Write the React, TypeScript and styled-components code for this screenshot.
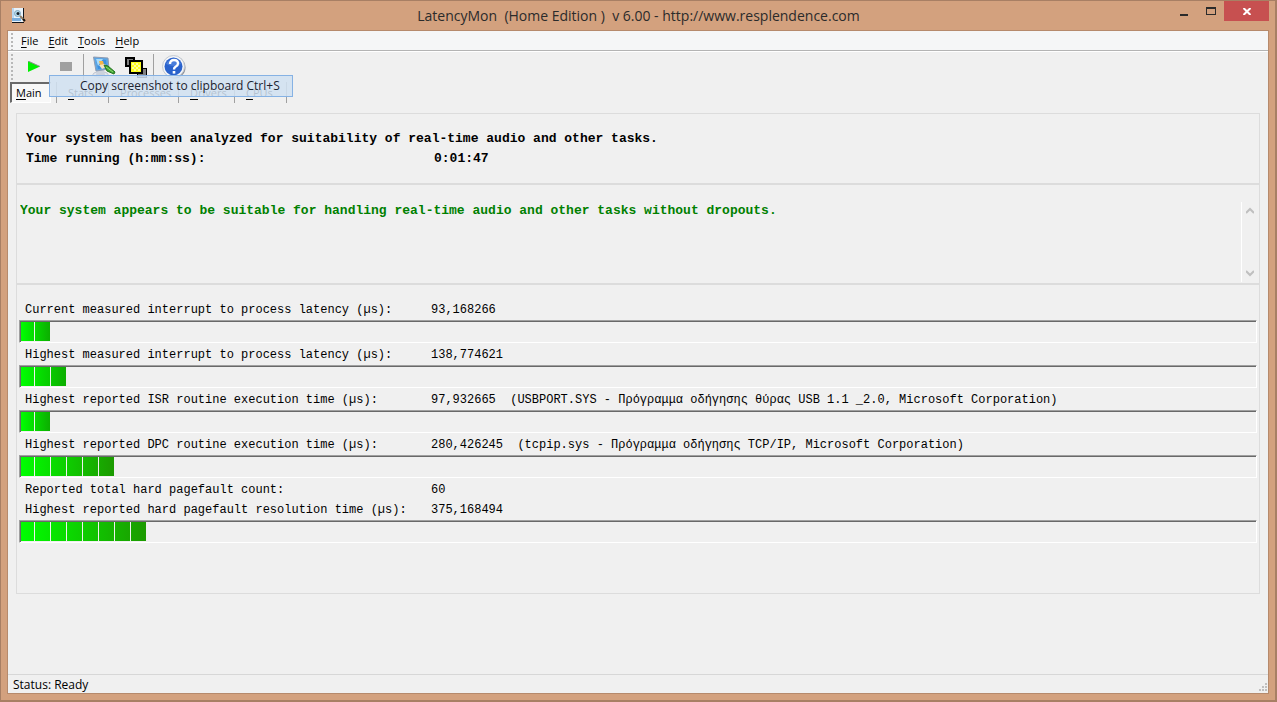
import React from "react";
import styled, { createGlobalStyle } from "styled-components";

const GlobalStyle = createGlobalStyle`
  * { box-sizing: border-box; }
  body { margin: 0; background: #ffffff; }
  button, textarea { font: inherit; color: inherit; margin: 0; padding: 0; border: 0; background: none; }
`;

const ui = `"Open Sans", "Noto Sans", sans-serif`;
const mono = `"Courier New", "Liberation Mono", monospace`;

const Window = styled.div`
  display: flex;
  flex-direction: column;
  min-height: 100vh;
  padding: 0 7px 7px;
  border: solid #a87f64;
  border-width: 1px 2px 2px 1px;
  background: #d3a17e;
  font: 12px/16px ${ui};
  color: #000000;
`;

const TitleBar = styled.header`
  display: grid;
  grid-template-columns: 100px 1fr 100px;
  height: 29px;
  margin-right: -1px;
`;

const TitleIcon = styled.div`
  padding: 6px 0 0 3px;
  line-height: 0;
`;

const Title = styled.h1`
  margin: 0;
  font-size: 14px;
  line-height: 29px;
  font-weight: 400;
  text-align: center;
  color: #2b2b2b;
  white-space: pre;
`;

const Controls = styled.div`
  display: flex;
  justify-content: flex-end;
`;

const ControlButton = styled.button<{ $close?: boolean }>`
  display: flex;
  align-items: center;
  justify-content: center;
  flex: none;
  width: ${(p) => (p.$close ? 45 : 27)}px;
  height: 20px;
  background: ${(p) => (p.$close ? "#c75050" : "transparent")};
`;

const Client = styled.div`
  flex: 1;
  display: flex;
  flex-direction: column;
  border: 1px solid #b68a6c;
  margin: 0 -1px -1px;
  background: #f0f0f0;
`;

const MenuBar = styled.nav`
  display: flex;
  align-items: center;
  height: 20px;
  padding-left: 3px;
  background: #f5f6f7;
  border-bottom: 1px solid #b4b4b4;
`;

const Grip = styled.span`
  flex: none;
  width: 3px;
  align-self: stretch;
  margin: 2px 4px 0 0;
  background: repeating-linear-gradient(to bottom, #b8b8b8 0 2px, transparent 2px 4px);
  background-size: 2px 100%;
  background-repeat: no-repeat;
`;

const MenuButton = styled.button`
  padding: 0 7px 0 3px;
  font-size: 11px;
  line-height: 16px;
`;

const Accel = styled.span`
  text-decoration: underline;
  text-underline-offset: 2px;
`;

const ToolBar = styled.div`
  display: flex;
  align-items: center;
  height: 31px;
  padding-left: 3px;
  border-top: 1px solid #ffffff;
`;

const ToolButton = styled.button`
  display: flex;
  align-items: center;
  justify-content: center;
  width: 32px;
  height: 28px;
`;

const ToolSeparator = styled.span`
  width: 1px;
  height: 26px;
  margin: 0 4px 0 1px;
  background: #a0a0a0;
`;

const TabArea = styled.div`
  position: relative;
`;

const Tabs = styled.div`
  display: flex;
  height: 21px;
  padding-left: 2px;
`;

const Tab = styled.button<{ $width: number; $active?: boolean }>`
  width: ${(p) => p.$width}px;
  height: 21px;
  padding-left: ${(p) => (p.$active ? 4 : 11)}px;
  font-size: 11px;
  text-align: left;
  border: solid;
  border-width: ${(p) => (p.$active ? "2px 1px 1px 2px" : "0 0 0 1px")};
  border-color: ${(p) => (p.$active ? "#696969 #ffffff #ffffff #696969" : "#a0a0a0")};
  margin-right: ${(p) => (p.$active ? 5 : 0)}px;
  background: ${(p) => (p.$active ? "#f8f8f8" : "transparent")};
`;

const TabEnd = styled.span`
  width: 1px;
  background: #a0a0a0;
`;

const HoverItem = styled.div`
  position: absolute;
  left: 41px;
  top: -7px;
  width: 244px;
  height: 22px;
  padding-left: 30px;
  line-height: 20px;
  white-space: nowrap;
  color: #1c2430;
  background: rgba(209, 225, 241, 0.86);
  border: 1px solid #86b2e4;
`;

const Panels = styled.main`
  flex: 1;
  padding: 10px 8px 0;
  font-family: ${mono};
`;

const Panel = styled.section<{ $height: number }>`
  min-height: ${(p) => p.$height}px;
  border: 1px solid #dcdcdc;
`;

const Summary = styled(Panel)`
  padding: 15px 9px 13px;
  font-size: 13px;
  line-height: 20px;
  font-weight: 700;
`;

const SummaryRow = styled.div`
  display: grid;
  grid-template-columns: 408px 1fr;
`;

const Verdict = styled(Panel)`
  display: flex;
  padding: 17px 0 1px 3px;
`;

const VerdictText = styled.textarea`
  flex: 1;
  height: 80px;
  resize: none;
  outline: none;
  overflow: hidden;
  font-size: 13px;
  line-height: 18px;
  font-weight: 700;
  color: #008000;
`;

const ScrollBar = styled.div`
  display: flex;
  flex-direction: column;
  justify-content: space-between;
  align-items: center;
  width: 18px;
  padding: 5px 2px 5px 0;
  border-left: 1px solid #ffffff;
`;

const Readings = styled(Panel)`
  padding: 13px 2px 0;
  font-size: 12px;
  line-height: 20px;
`;

const Reading = styled.div`
  padding-top: 2px;
`;

const ReadingRow = styled.div`
  display: grid;
  grid-template-columns: 406px 1fr;
  padding-left: 6px;
  height: 20px;
  white-space: pre;
`;

const Gauge = styled.div`
  height: 23px;
  border: 1px solid #ffffff;
  border-top-color: #a0a0a0;
  border-left-color: #a0a0a0;
`;

const GaugeWell = styled.div`
  height: 21px;
  border: solid #696969;
  border-width: 1px 0 0 1px;
  padding-bottom: 1px;
`;

const GaugeFill = styled.div<{ $blocks: number }>`
  width: ${(p) => p.$blocks * 16 - 3}px;
  height: 19px;
  background:
    repeating-linear-gradient(to right, #f0f0f0 0 1px, transparent 1px 16px) -3px 0 / 400px 100%,
    linear-gradient(to right, #00ff00, ${(p) => (p.$blocks > 4 ? "#1c9a00" : "#0cae00")});
`;

const StatusBar = styled.footer`
  display: flex;
  justify-content: space-between;
  height: 19px;
  padding: 2px 1px 0 5px;
  border-top: 1px solid #d7d7d7;
`;

const SizeGrip = styled.svg`
  align-self: flex-end;
  margin-bottom: 2px;
`;

const AppIcon = () => (
  <svg width="16" height="16" viewBox="0 0 16 16">
    <path d="M1 1h11v14H1z" fill="#e9f3fb" />
    <path d="M1 1h2v13H1z" fill="#b9d8f1" />
    <path d="M1 11h9v3H1z" fill="#79aede" />
    <path d="M12.500 1v10M1 15.500h12" stroke="#10151c" />
    <circle cx="6.500" cy="6.500" r="3" fill="#b7dcec" stroke="#7fa6c0" />
    <circle cx="7" cy="6.500" r="1.500" fill="#17202a" />
    <path d="M9 9l4 4" stroke="#8d7a60" strokeWidth="2" />
    <path d="M12 12l2 2" stroke="#111" strokeWidth="2" />
  </svg>
);

const CleanIcon = () => (
  <svg width="24" height="22" viewBox="0 0 24 22">
    <ellipse cx="8.500" cy="18.500" rx="7.500" ry="2.800" fill="#e3e6ec" stroke="#bcc2cd" />
    <path d="M5 14h7l1 5H4z" fill="#ccd2dc" />
    <path d="M1.500 1l14.500 1 1 11-13 2z" fill="#5ba6e6" stroke="#8f9bb0" />
    <path d="M4 3l10 1 1 8-9 1z" fill="#3b8fe0" />
    <path d="M4 3h7L6 10z" fill="#a9dcfa" />
    <path d="M7 5h4l1 4H8z" fill="#f4b547" />
    <path d="M7 9l6-1 2 3-5 2z" fill="#f5e3bf" />
    <path d="M12 9l4 1 7 6-1 2-7-3z" fill="#3fa234" stroke="#24731f" />
    <path d="M14 11l7 5" stroke="#8ddb6d" />
  </svg>
);

const CopyIcon = () => (
  <svg width="22" height="21" viewBox="0 0 22 21" shapeRendering="crispEdges">
    <rect x="1" y="1" width="8" height="8" fill="#808080" stroke="#000" strokeWidth="2" />
    <path d="M12 11h10v10H12z" fill="#000" />
    <path d="M13 12h8v8h-8z" fill="#808080" />
    <rect x="5" y="4" width="12" height="12" fill="#ffff20" stroke="#000" strokeWidth="2" />
    <path d="M7 6h2v2H7zM11 6h2v2h-2zM9 8h2v2H9zM13 8h2v2h-2zM7 10h2v2H7zM11 10h2v2h-2zM9 12h2v2H9zM13 12h2v2h-2z" fill="#ffffa0" />
  </svg>
);

const HelpIcon = () => (
  <svg width="24" height="24" viewBox="0 0 24 24">
    <circle cx="12.500" cy="12.500" r="11" fill="#8d929b" />
    <circle cx="11.500" cy="11.500" r="11" fill="#f3f5f8" stroke="#c4c9d0" />
    <circle cx="11.500" cy="11.500" r="9" fill="#2a62cc" />
    <path d="M4 9a8 7 0 0 1 15 0q-7 4-15 0z" fill="#4a7edb" />
    <path d="M8 9q0-4 4-4t4 3.500q0 2-2.500 3.300-1.500.8-1.500 2.700" fill="none" stroke="#fff" strokeWidth="2.400" />
    <rect x="10.700" y="16" width="2.600" height="2.600" fill="#fff" />
  </svg>
);

const readings = [
  { rows: [["Current measured interrupt to process latency (µs):", "93,168266"]], blocks: 2 },
  { rows: [["Highest measured interrupt to process latency (µs):", "138,774621"]], blocks: 3 },
  {
    rows: [[
      "Highest reported ISR routine execution time (µs):",
      "97,932665  (USBPORT.SYS - Πρόγραμμα οδήγησης θύρας USB 1.1 _2.0, Microsoft Corporation)",
    ]],
    blocks: 2,
  },
  {
    rows: [[
      "Highest reported DPC routine execution time (µs):",
      "280,426245  (tcpip.sys - Πρόγραμμα οδήγησης TCP/IP, Microsoft Corporation)",
    ]],
    blocks: 6,
  },
  {
    rows: [
      ["Reported total hard pagefault count:", "60"],
      ["Highest reported hard pagefault resolution time (µs):", "375,168494"],
    ],
    blocks: 8,
  },
];

const menus = ["File", "Edit", "Tools", "Help"];
const tabs = [
  { name: "Main", width: 41 },
  { name: "Stats", width: 52 },
  { name: "Processes", width: 70 },
  { name: "Drivers", width: 56 },
  { name: "CPUs", width: 52 },
];

const AccelText = ({ text }: { text: string }) => (
  <>
    <Accel>{text[0]}</Accel>
    {text.slice(1)}
  </>
);

export default function App() {
  return (
    <>
      <GlobalStyle />
      <Window>
        <TitleBar>
          <TitleIcon><AppIcon /></TitleIcon>
          <Title>{"LatencyMon  (Home Edition )  v 6.00 - http://www.resplendence.com"}</Title>
          <Controls>
            <ControlButton aria-label="Minimize">
              <svg width="8" height="12"><path d="M0 9h8v2H0z" fill="#2b2b2b" /></svg>
            </ControlButton>
            <ControlButton aria-label="Maximize">
              <svg width="10" height="8" shapeRendering="crispEdges">
                <path fillRule="evenodd" d="M0 0h10v8H0zM1 2v5h8V2z" fill="#2b2b2b" />
              </svg>
            </ControlButton>
            <ControlButton $close aria-label="Close">
              <svg width="8" height="7"><path d="M.5 0l7 7M7.500 0l-7 7" stroke="#fff" strokeWidth="2" /></svg>
            </ControlButton>
          </Controls>
        </TitleBar>
        <Client>
          <MenuBar>
            <Grip />
            {menus.map((m) => (
              <MenuButton key={m}><AccelText text={m} /></MenuButton>
            ))}
          </MenuBar>
          <ToolBar>
            <Grip />
            <ToolButton aria-label="Start">
              <svg width="12" height="12"><path d="M0 0l12 5.500L0 11z" fill="#00f000" /><path d="M0 0l12 5.500" stroke="#8f8f8f" /></svg>
            </ToolButton>
            <ToolButton aria-label="Stop">
              <svg width="12" height="10"><path d="M0 0h12v9H0z" fill="#a0a0a0" /></svg>
            </ToolButton>
            <ToolSeparator />
            <ToolButton aria-label="Clean"><CleanIcon /></ToolButton>
            <ToolButton aria-label="Copy screenshot"><CopyIcon /></ToolButton>
            <ToolSeparator />
            <ToolButton aria-label="Help"><HelpIcon /></ToolButton>
          </ToolBar>
          <TabArea>
            <Tabs role="tablist">
              {tabs.map((t, i) => (
                <Tab key={t.name} role="tab" aria-selected={i === 0} $width={t.width} $active={i === 0}>
                  <AccelText text={t.name} />
                </Tab>
              ))}
              <TabEnd />
            </Tabs>
            <HoverItem>Copy screenshot to clipboard Ctrl+S</HoverItem>
          </TabArea>
          <Panels>
            <Summary $height={71}>
              <div>Your system has been analyzed for suitability of real-time audio and other tasks.</div>
              <SummaryRow>
                <span>Time running (h:mm:ss):</span>
                <span>0:01:47</span>
              </SummaryRow>
            </Summary>
            <Verdict $height={100}>
              <VerdictText
                readOnly
                aria-label="Conclusion"
                defaultValue="Your system appears to be suitable for handling real-time audio and other tasks without dropouts."
              />
              <ScrollBar>
                <svg width="8" height="7"><path d="M0 6l4-4 4 4" fill="none" stroke="#bfbfbf" strokeWidth="2" /></svg>
                <svg width="8" height="7"><path d="M0 1l4 4 4-4" fill="none" stroke="#bfbfbf" strokeWidth="2" /></svg>
              </ScrollBar>
            </Verdict>
            <Readings $height={310}>
              {readings.map((r) => (
                <Reading key={r.rows[0][0]}>
                  {r.rows.map(([label, value]) => (
                    <ReadingRow key={label}>
                      <span>{label}</span>
                      <span>{value}</span>
                    </ReadingRow>
                  ))}
                  <Gauge>
                    <GaugeWell><GaugeFill $blocks={r.blocks} /></GaugeWell>
                  </Gauge>
                </Reading>
              ))}
            </Readings>
          </Panels>
          <StatusBar>
            <span>Status: Ready</span>
            <SizeGrip width="8" height="8" shapeRendering="crispEdges">
              <path d="M6 0h2v2H6zM3 3h2v2H3zM6 3h2v2H6zM0 6h2v2H0zM3 6h2v2H3zM6 6h2v2H6z" fill="#bfbfbf" />
            </SizeGrip>
          </StatusBar>
        </Client>
      </Window>
    </>
  );
}
